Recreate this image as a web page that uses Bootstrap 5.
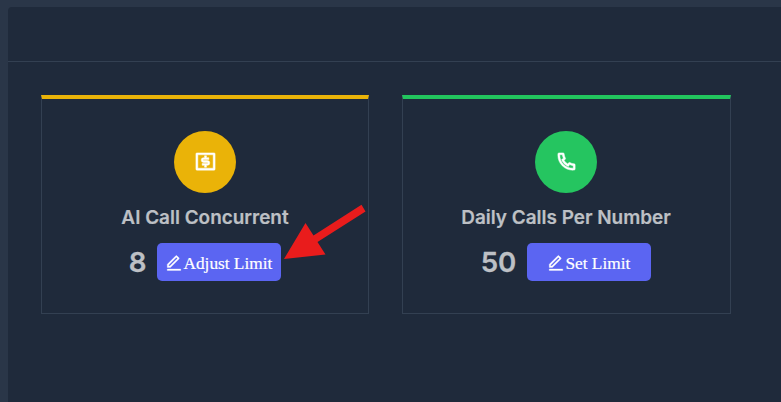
<!DOCTYPE html>
<html lang="en" data-bs-theme="dark">
<head>
<meta charset="utf-8">
<meta name="viewport" content="width=device-width, initial-scale=1">
<title>Call Limits</title>
<link href="https://cdn.jsdelivr.net/npm/bootstrap@5.3.0/dist/css/bootstrap.min.css" rel="stylesheet">
<style>
  body { background: #2a3648; font-family: Inter, sans-serif; height: 402px; color: #bdc0c5; }
  .panel { margin: 7px 0 0 8px; height: 395px; background: #1f2a3b; border-top-left-radius: 4px; }
  .panel-head { height: 55px; border-bottom: 1px solid #334052; }
  .limit-row { padding: 33px 0 0 33px; gap: 33px; }
  .limit-card { flex: none; width: 328px; height: 219px; border: 1px solid #334052; border-top: 4px solid; padding-top: 32px; }
  .top-amber { border-top-color: #eab308; }
  .top-green { width: 329px; border-top-color: #22c55e; padding-right: 1px; }
  .disc { width: 62px; height: 62px; color: #fff; }
  .disc svg { width: 23px; height: 23px; stroke: currentColor; stroke-width: .5; position: relative; top: -1px; }
  .bg-amber { background: #eab308; }
  .bg-green { background: #25c560; }
  .limit-title { font-size: 18.95px; font-weight: 600; line-height: 26px; margin: 12px 0 0; white-space: nowrap; color: inherit; -webkit-text-stroke: .2px; }
  .limit-value { font-size: 27.7px; font-weight: 600; line-height: 36px; -webkit-text-stroke: .3px; }
  .value-row { gap: 11px; margin-top: 12px; }
  .btn-limit { width: 124px; height: 38px; background: #5b65f2; color: #fff; font: 17.3px "Liberation Serif", serif; border-radius: 5px; }
  .btn-limit, .btn-limit:hover { color: #fff; }
  .btn-limit svg { width: 18px; height: 18px; margin-top: 2px; stroke: currentColor; stroke-width: .4; }
  .btn-limit span { padding: 3px 1px 0 0; -webkit-text-stroke: .2px; }
  .pointer-arrow { left: 280px; top: 200px; }
</style>
</head>
<body class="overflow-hidden position-relative">
<main class="panel">
  <div class="panel-head"></div>
  <div class="limit-row d-flex">
    <section class="limit-card top-amber d-flex flex-column align-items-center">
      <div class="disc bg-amber rounded-circle d-flex align-items-center justify-content-center">
        <svg viewBox="0 0 24 24" fill="currentColor"><path d="M3 3h18a1 1 0 0 1 1 1v16a1 1 0 0 1-1 1H3a1 1 0 0 1-1-1V4a1 1 0 0 1 1-1zm1 2v14h16V5H4zm4.500 9H14a.5.5 0 1 0 0-1h-4a2.500 2.500 0 1 1 0-5h1V6h2v2h2.500v2H10a.5.5 0 1 0 0 1h4a2.500 2.500 0 1 1 0 5h-1v2h-2v-2H8.500v-2z"/></svg>
      </div>
      <h2 class="limit-title">AI Call Concurrent</h2>
      <div class="value-row d-flex align-items-center">
        <span class="limit-value">8</span>
        <button type="button" class="btn btn-limit border-0 p-0 d-flex align-items-center justify-content-center">
          <svg viewBox="0 0 24 24" fill="currentColor"><path d="M6.414 16L16.556 5.858l-1.414-1.414L5 14.586V16h1.414zm.829 2H3v-4.243L14.435 2.322a1 1 0 0 1 1.414 0l2.829 2.829a1 1 0 0 1 0 1.414L7.243 18zM3 20h18v2H3v-2z"/></svg><span>Adjust Limit</span>
        </button>
      </div>
    </section>
    <section class="limit-card top-green d-flex flex-column align-items-center">
      <div class="disc bg-green rounded-circle d-flex align-items-center justify-content-center">
        <svg viewBox="0 0 24 24" fill="currentColor"><path d="M9.366 10.682a10.556 10.556 0 0 0 3.952 3.952l.884-1.238a1 1 0 0 1 1.294-.296 11.422 11.422 0 0 0 4.583 1.364 1 1 0 0 1 .921.997v4.462a1 1 0 0 1-.898.995c-.53.055-1.064.082-1.602.082C9.940 21 3 14.060 3 5.500c0-.538.027-1.072.082-1.602A1 1 0 0 1 4.077 3h4.462a1 1 0 0 1 .997.921A11.422 11.422 0 0 0 10.900 8.504a1 1 0 0 1-.296 1.294l-1.238.884zm-2.522-.657l1.900-1.357A13.410 13.410 0 0 1 7.647 5H5.010c-.006.166-.009.333-.009.500C5 12.956 11.044 19 18.500 19c.167 0 .334-.003.500-.010v-2.637a13.410 13.410 0 0 1-3.668-1.097l-1.357 1.900a12.442 12.442 0 0 1-1.588-.750l-.058-.033a12.556 12.556 0 0 1-4.702-4.702l-.033-.058a12.442 12.442 0 0 1-.750-1.588z"/></svg>
      </div>
      <h2 class="limit-title">Daily Calls Per Number</h2>
      <div class="value-row d-flex align-items-center">
        <span class="limit-value">50</span>
        <button type="button" class="btn btn-limit border-0 p-0 d-flex align-items-center justify-content-center">
          <svg viewBox="0 0 24 24" fill="currentColor"><path d="M6.414 16L16.556 5.858l-1.414-1.414L5 14.586V16h1.414zm.829 2H3v-4.243L14.435 2.322a1 1 0 0 1 1.414 0l2.829 2.829a1 1 0 0 1 0 1.414L7.243 18zM3 20h18v2H3v-2z"/></svg><span>Set Limit</span>
        </button>
      </div>
    </section>
  </div>
</main>
<!-- Callout arrow over the first card -->
<svg class="pointer-arrow position-absolute" width="90" height="65" viewBox="0 0 90 65"><path fill="#e91c1c" d="M4 59L25.500 23L33.500 35.500L81.500 4.800L85.500 11.500L37.500 42L45.500 54.500Z"/></svg>
<script src="https://cdn.jsdelivr.net/npm/bootstrap@5.3.0/dist/js/bootstrap.bundle.min.js"></script>
</body>
</html>
